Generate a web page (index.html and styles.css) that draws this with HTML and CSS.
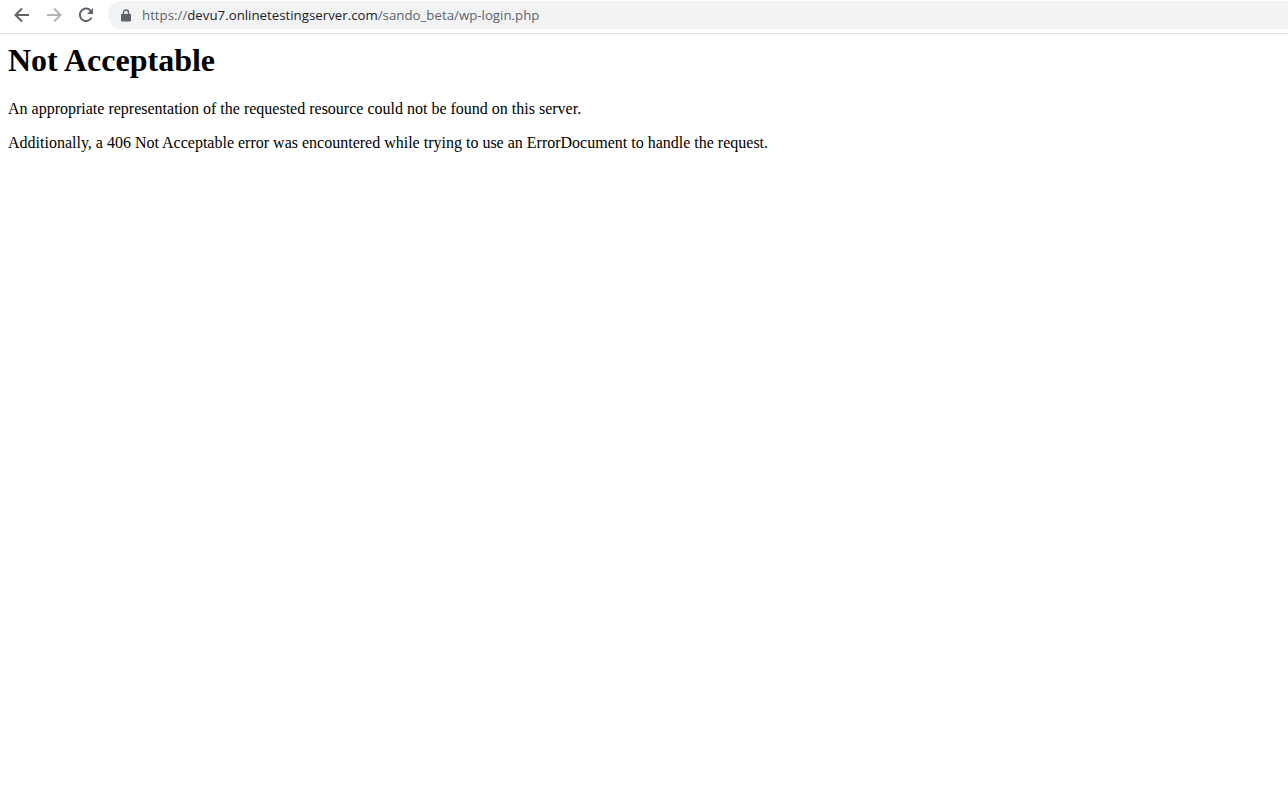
FILE: index.html
```html
<!DOCTYPE html>
<html lang="en">
<head>
<meta charset="utf-8">
<title>406 Not Acceptable</title>
<link rel="stylesheet" href="styles.css">
</head>
<body>
<header class="toolbar">
  <nav class="nav-buttons">
    <svg class="nav-icon" viewBox="0 0 16 16" width="16" height="16"><path class="stroke dark" d="M15 8H2M8 1.5 1.5 8 8 14.5"/></svg>
    <svg class="nav-icon" viewBox="0 0 16 16" width="16" height="16"><path class="stroke light" d="M1 8h13M8 1.5 14.5 8 8 14.5"/></svg>
    <svg class="nav-icon" viewBox="0 0 16 16" width="16" height="16"><path class="stroke dark" d="M13.6 10.6A6.2 6.2 0 1 1 12.6 3.6L14.4 5.4"/><path class="fill-dark" d="M15 1v6H9z"/></svg>
  </nav>
  <div class="omnibox">
    <svg class="lock" viewBox="0 0 10 13" width="10" height="13"><path class="fill-lock" d="M1 5h8a1 1 0 0 1 1 1v5.500a1 1 0 0 1-1 1H1a1 1 0 0 1-1-1V6a1 1 0 0 1 1-1z"/><path class="lock-shackle" d="M2.500 5.500V3.500a2.500 2.500 0 0 1 5 0v2"/></svg>
    <span class="url"><span class="muted">https://</span>devu7.onlinetestingserver.com<span class="muted">/sando_beta/wp-login.php</span></span>
  </div>
</header>
<main class="content">
  <h1>Not Acceptable</h1>
  <p>An appropriate representation of the requested resource could not be found on this server.</p>
  <p>Additionally, a 406 Not Acceptable error was encountered while trying to use an ErrorDocument to handle the request.</p>
</main>
</body>
</html>
```
FILE: styles.css
```css
html, body {
  margin: 0;
  padding: 0;
  background: #fff;
  color: #000;
}
body {
  font-family: "Liberation Serif", "Times New Roman", serif;
  font-size: 16px;
  overflow: hidden;
}
.toolbar {
  display: flex;
  height: 32px;
  box-sizing: content-box;
  border-bottom: 1px solid #dadada;
  padding-top: 1px;
}
.nav-buttons {
  display: flex;
  align-items: center;
  gap: 16px;
  width: 108px;
  height: 28px;
  padding-left: 14px;
  box-sizing: border-box;
}
.stroke {
  fill: none;
  stroke-width: 2;
}
.dark { stroke: #5f6368; }
.light { stroke: #b1b3b6; }
.fill-dark { fill: #5f6368; }
.fill-lock { fill: #5f6368; }
.lock-shackle {
  fill: none;
  stroke: #5f6368;
  stroke-width: 1.500;
}
.omnibox {
  flex: 1;
  display: flex;
  align-items: center;
  height: 28px;
  background: #f1f3f4;
  border-radius: 14px 0 0 14px;
  padding-left: 13px;
}
.lock {
  margin-right: 11px;
}
.url {
  font-family: "Open Sans", "Noto Sans", sans-serif;
  font-size: 13.27px;
  color: #202124;
  white-space: nowrap;
}
.muted { color: #5f6368; }
.content {
  padding: 0 8px;
}
h1 {
  font-size: 32px;
  font-weight: bold;
  margin: 8px 0 21px;
  line-height: 37px;
}
p {
  margin: 16px 0;
  line-height: 18px;
}
```
